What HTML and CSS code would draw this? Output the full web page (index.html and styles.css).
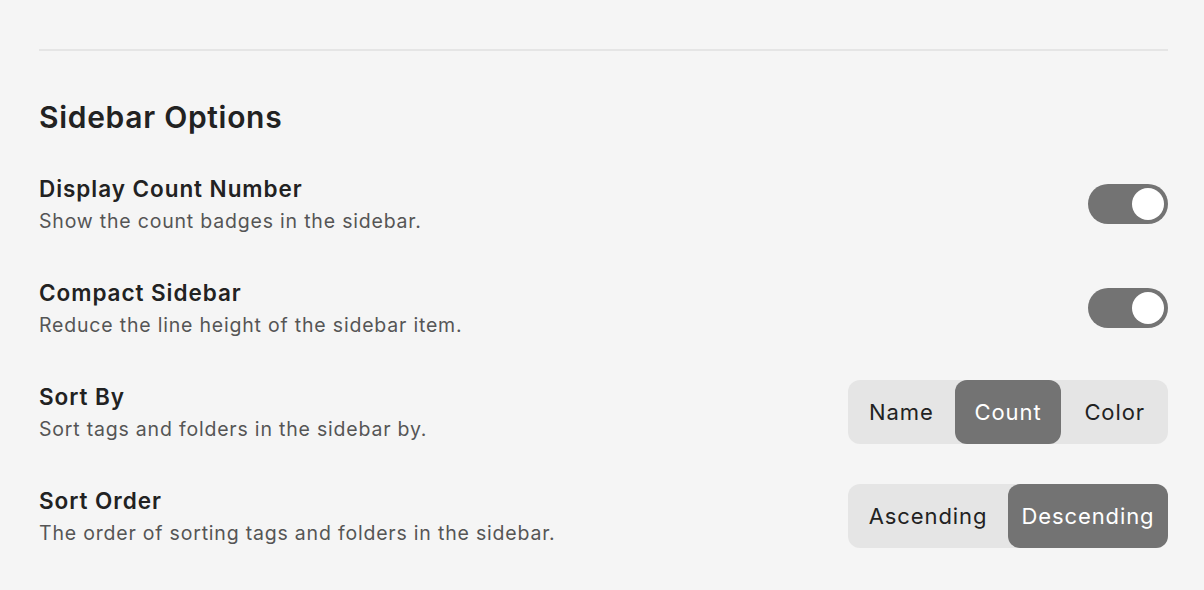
FILE: index.html
```html
<!DOCTYPE html>
<html>
<head>
<meta charset="utf-8">
<link rel="stylesheet" href="styles.css">
</head>
<body>
<div class="page">
  <hr class="divider">
  <h2 class="section-title">Sidebar Options</h2>
  <div class="rows">
    <div class="row">
      <div class="text">
        <div class="label">Display Count Number</div>
        <div class="desc">Show the count badges in the sidebar.</div>
      </div>
      <div class="toggle on"><span class="knob"></span></div>
    </div>
    <div class="row">
      <div class="text">
        <div class="label">Compact Sidebar</div>
        <div class="desc">Reduce the line height of the sidebar item.</div>
      </div>
      <div class="toggle on"><span class="knob"></span></div>
    </div>
    <div class="row">
      <div class="text">
        <div class="label">Sort By</div>
        <div class="desc">Sort tags and folders in the sidebar by.</div>
      </div>
      <div class="segmented">
        <div class="seg">Name</div>
        <div class="seg active">Count</div>
        <div class="seg">Color</div>
      </div>
    </div>
    <div class="row">
      <div class="text">
        <div class="label">Sort Order</div>
        <div class="desc">The order of sorting tags and folders in the sidebar.</div>
      </div>
      <div class="segmented">
        <div class="seg">Ascending</div>
        <div class="seg active">Descending</div>
      </div>
    </div>
  </div>
</div>
</body>
</html>
```

FILE: styles.css
```css
html, body {
  margin: 0;
  padding: 0;
  background: #f5f5f5;
}
body {
  font-family: Inter, "Noto Sans", sans-serif;
  color: #222;
}
.page {
  padding: 49px 36px 0 39px;
}
.divider {
  margin: 0;
  border: 0;
  height: 2px;
  background: #e5e5e5;
}
.section-title {
  margin: 48px 0 0 0;
  font-size: 30px;
  line-height: 36px;
  font-weight: 600;
  letter-spacing: 0.7px;
  color: #222;
}
.rows {
  margin-top: 37px;
  display: flex;
  flex-direction: column;
  gap: 40px;
}
.row {
  display: flex;
  align-items: center;
  justify-content: space-between;
  height: 64px;
}
.text {
  display: flex;
  flex-direction: column;
  gap: 4px;
  padding-top: 1px;
}
.label {
  font-size: 22.5px;
  line-height: 28px;
  font-weight: 600;
  letter-spacing: 0.95px;
  color: #222;
}
.desc {
  font-size: 19.5px;
  line-height: 28px;
  color: #555;
  letter-spacing: 0.8px;
}
.toggle {
  width: 80px;
  height: 40px;
  border-radius: 20px;
  background: #737373;
  display: flex;
  align-items: center;
  justify-content: flex-end;
  padding: 0 4px;
  box-sizing: border-box;
}
.knob {
  width: 32px;
  height: 32px;
  border-radius: 50%;
  background: #fff;
}
.segmented {
  display: flex;
  width: 320px;
  height: 64px;
  background: #e5e5e5;
  border-radius: 12px;
}
.seg {
  flex: 1;
  display: flex;
  align-items: center;
  justify-content: center;
  font-size: 22px;
  letter-spacing: 0.9px;
  color: #222;
  border-radius: 12px;
}
.seg.active {
  background: #737373;
  color: #fff;
}
```
